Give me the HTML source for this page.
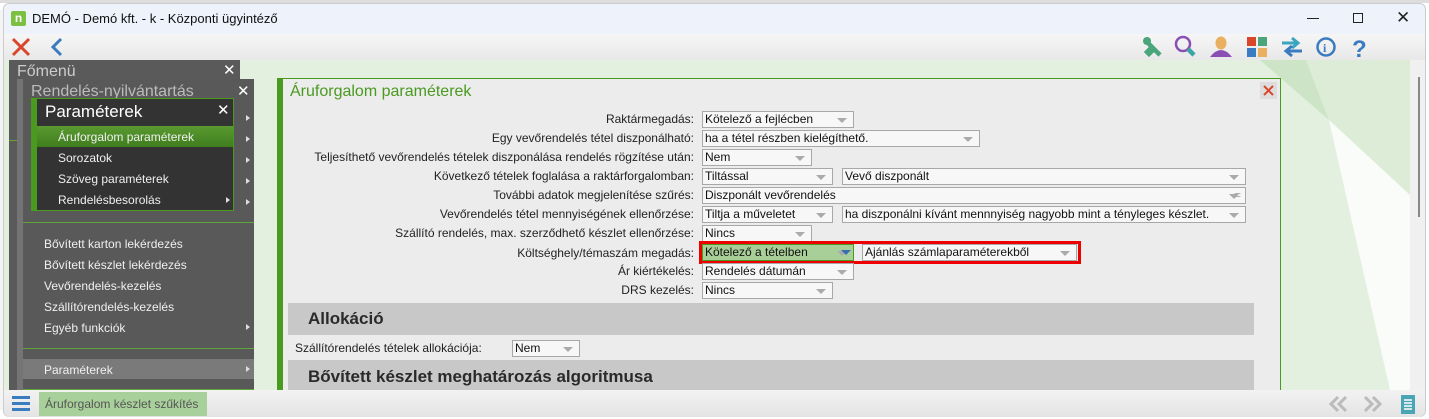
<!DOCTYPE html>
<html><head><meta charset="utf-8"><style>
*{margin:0;padding:0;box-sizing:border-box}
body{width:1429px;height:419px;overflow:hidden;background:#fff;font-family:"Liberation Sans",sans-serif;position:relative}
.a{position:absolute}
.lbl{position:absolute;right:735px;font-size:12px;color:#222;white-space:nowrap;line-height:14px}
.dd{position:absolute;height:17px;border:1px solid #a8a8a8;background:#f7f7f7;font-size:12px;color:#111;line-height:15px;padding-left:2px;white-space:nowrap;overflow:hidden}
.dd:after{content:"";position:absolute;right:6px;top:6px;border-left:5px solid transparent;border-right:5px solid transparent;border-top:5px solid #aaa}
.mi{position:absolute;left:44px;font-size:12px;color:#f0f0f0;line-height:14px;white-space:nowrap}
.sm{position:absolute;left:58px;font-size:12px;color:#f0f0f0;line-height:14px;white-space:nowrap}
.ar{position:absolute;width:0;height:0;border-top:3px solid transparent;border-bottom:3px solid transparent;border-left:4px solid #ddd}
.sec{position:absolute;left:288px;width:966px;background:#c8c8c8;font-weight:bold;font-size:17px;color:#2a2a2a;padding-left:20px}
</style></head><body>
<div class="a" style="left:0;top:0;width:1429px;height:3px;background:#ddd"></div>
<div class="a" style="left:3px;top:3px;width:1423px;height:414px;background:#eef2fa;border-radius:6px;border:1px solid #ccc"></div>
<div class="a" style="left:11px;top:11px;width:15px;height:15px;background:#7bc043;border-radius:2px;color:#fff;font-size:12px;font-weight:bold;line-height:14px;text-align:center">n</div>
<div class="a" style="left:32px;top:11px;font-size:13px;color:#111">DEMÓ - Demó kft. - k - Központi ügyintéző</div>
<div class="a" style="left:1307px;top:18px;width:12px;height:1px;background:#222"></div>
<div class="a" style="left:1353px;top:13px;width:10px;height:10px;border:1px solid #222"></div>
<div class="a" style="left:1396px;top:8px;font-size:17px;color:#222">✕</div>
<div class="a" style="left:4px;top:34px;width:1421px;height:26px;background:linear-gradient(#f6f6f6,#e8e8e8)"></div>
<svg class="a" style="left:10px;top:36px" width="22" height="22"><path d="M3 3L19 19M19 3L3 19" stroke="#d9472b" stroke-width="3"/></svg>
<svg class="a" style="left:48px;top:36px" width="18" height="22"><path d="M13 3L5 11L13 19" stroke="#3a7cc0" stroke-width="3" fill="none"/></svg>
<svg class="a" style="left:1140px;top:34px" width="240" height="26">
<path d="M6 7l6 6 -5 5 2 2 5-5 6 6" stroke="#4aa57a" stroke-width="4.5" fill="none"/><circle cx="7" cy="7" r="4" fill="#4aa57a"/>
<circle cx="43" cy="10" r="7" stroke="#8a4fb5" stroke-width="2.5" fill="none"/><path d="M48 15l6 6" stroke="#3aa5a5" stroke-width="4.5"/>
<ellipse cx="81" cy="9" rx="5.5" ry="6.5" fill="#e8b060"/><path d="M70 23q11-14 22 0z" fill="#8a4fb5"/>
<rect x="107" y="3" width="9" height="9" fill="#d9472b"/><rect x="118" y="3" width="9" height="9" fill="#4aa57a"/><rect x="107" y="14" width="9" height="9" fill="#3a7cc0"/><rect x="118" y="14" width="9" height="9" fill="#e8b060"/>
<path d="M142 9h14M152 4l6 5-6 5" stroke="#3aa5c0" stroke-width="3" fill="none"/><path d="M162 17h-14M152 12l-6 5 6 5" stroke="#3a7cc0" stroke-width="3" fill="none"/>
<circle cx="186" cy="13" r="8.5" stroke="#3a7cc0" stroke-width="2.5" fill="none"/><text x="183" y="18" font-size="12" font-weight="bold" fill="#3a7cc0" font-family="Liberation Serif">i</text>
<text x="212" y="23" font-size="24" font-weight="bold" fill="#3a7cc0" font-family="Liberation Sans">?</text>
</svg>
<div class="a" style="left:4px;top:60px;width:1406px;height:330px;background:#e3f0df"></div>
<svg class="a" style="left:1240px;top:60px" width="170" height="330"><polygon points="20,0 66,0 89,60" fill="#cde5c6"/><polygon points="66,0 170,0 170,135 89,60" fill="#ddecd6"/><polygon points="89,60 170,135 170,150 200,330 150,330" fill="#f9fcf8"/></svg>
<div class="a" style="left:1410px;top:60px;width:15px;height:330px;background:#f0f0f0"></div>
<div class="a" style="left:1418px;top:77px;width:2px;height:140px;background:#888"></div>
<div class="a" style="left:9px;top:60px;width:231px;height:330px;background:#5a5a5a"></div>
<div class="a" style="left:17px;top:63px;font-size:16px;color:#ccc">Főmenü</div>
<div class="a" style="left:223px;top:61px;font-size:15px;color:#fff">✕</div>
<div class="a" style="left:9px;top:140px;width:10px;height:1px;background:#5fa53a"></div>
<div class="a" style="left:17px;top:79px;width:237px;height:311px;background:#595959"></div>
<div class="a" style="left:17px;top:79px;width:6px;height:311px;background:#747474"></div>
<div class="a" style="left:31px;top:83px;font-size:16px;color:#bbb">Rendelés-nyilvántartás</div>
<div class="a" style="left:237px;top:82px;font-size:15px;color:#fff">✕</div>
<div class="a" style="left:23px;top:222px;width:231px;height:1px;background:#5fa53a"></div>
<div class="mi" style="top:237px">Bővített karton lekérdezés</div>
<div class="mi" style="top:258px">Bővített készlet lekérdezés</div>
<div class="mi" style="top:279px">Vevőrendelés-kezelés</div>
<div class="mi" style="top:300px">Szállítórendelés-kezelés</div>
<div class="mi" style="top:321px">Egyéb funkciók</div>
<div class="a" style="left:23px;top:348px;width:231px;height:1px;background:#5fa53a"></div>
<div class="a" style="left:23px;top:359px;width:231px;height:20px;background:#7a7a7a"></div>
<div class="mi" style="top:363px">Paraméterek</div>
<div class="a" style="left:23px;top:389px;width:231px;height:1px;background:#5fa53a"></div>
<div class="ar" style="left:246px;top:115px"></div><div class="ar" style="left:246px;top:136px"></div><div class="ar" style="left:246px;top:157px"></div><div class="ar" style="left:246px;top:178px"></div><div class="ar" style="left:246px;top:199px"></div><div class="ar" style="left:246px;top:324px"></div><div class="ar" style="left:246px;top:366px"></div>
<div class="a" style="left:31px;top:98px;width:203px;height:113px;background:#333;border:1px solid #4a9a20;border-left-width:6px"></div>
<div class="a" style="left:45px;top:102px;font-size:17px;color:#fff">Paraméterek</div>
<div class="a" style="left:217px;top:101px;font-size:15px;color:#fff">✕</div>
<div class="a" style="left:37px;top:126px;width:196px;height:21px;background:linear-gradient(#5a9a30,#3f7d1e)"></div>
<div class="sm" style="top:130px">Áruforgalom paraméterek</div>
<div class="sm" style="top:151px">Sorozatok</div>
<div class="sm" style="top:172px">Szöveg paraméterek</div>
<div class="sm" style="top:193px">Rendelésbesorolás</div>
<div class="ar" style="left:226px;top:197px"></div>
<div class="a" style="left:0;top:10px;width:3px;height:400px;background:#f4f4f4"></div>
<div class="a" style="left:277px;top:78px;width:1004px;height:312px;background:#ececec;border-top:1px solid #4a9a20;border-right:1px solid #4a9a20;border-left:6px solid #4a9a20"></div>
<div class="a" style="left:290px;top:83px;font-size:16px;color:#4a9a20">Áruforgalom paraméterek</div>
<div class="a" style="left:1260px;top:82px;width:17px;height:17px;background:#ddd"></div>
<svg class="a" style="left:1262px;top:84px" width="13" height="13"><path d="M2 2L11 11M11 2L2 11" stroke="#d9472b" stroke-width="2"/></svg>

<div class="lbl" style="top:112px">Raktármegadás:</div>
<div class="lbl" style="top:131px">Egy vevőrendelés tétel diszponálható:</div>
<div class="lbl" style="top:150px">Teljesíthető vevőrendelés tételek diszponálása rendelés rögzítése után:</div>
<div class="lbl" style="top:169px">Következő tételek foglalása a raktárforgalomban:</div>
<div class="lbl" style="top:188px">További adatok megjelenítése szűrés:</div>
<div class="lbl" style="top:207px">Vevőrendelés tétel mennyiségének ellenőrzése:</div>
<div class="lbl" style="top:226px">Szállító rendelés, max. szerződhető készlet ellenőrzése:</div>
<div class="lbl" style="top:246px">Költséghely/témaszám megadás:</div>
<div class="lbl" style="top:264px">Ár kiértékelés:</div>
<div class="lbl" style="top:283px">DRS kezelés:</div>

<div class="dd" style="left:702px;top:111px;width:152px">Kötelező a fejlécben</div>
<div class="dd" style="left:702px;top:130px;width:278px">ha a tétel részben kielégíthető.</div>
<div class="dd" style="left:702px;top:149px;width:110px">Nem</div>
<div class="dd" style="left:702px;top:168px;width:131px">Tiltással</div>
<div class="dd" style="left:842px;top:168px;width:404px">Vevő diszponált</div>
<div class="dd" style="left:702px;top:187px;width:544px">Diszponált vevőrendelés<span style="position:absolute;right:4px;top:0;color:#aaa">=</span></div>
<div class="dd" style="left:702px;top:206px;width:131px">Tiltja a műveletet</div>
<div class="dd" style="left:842px;top:206px;width:404px">ha diszponálni kívánt mennnyiség nagyobb mint a tényleges készlet.</div>
<div class="dd" style="left:702px;top:225px;width:110px">Nincs</div>
<div class="a" style="left:699px;top:241px;width:382px;height:23px;border:3px solid #e00"></div>
<div class="dd" style="left:702px;top:244px;width:152px;background:#a9cf98;border-color:#4a9a20">Kötelező a tételben</div>
<div class="a" style="left:841px;top:250px;border-left:5px solid transparent;border-right:5px solid transparent;border-top:5px solid #3a6cb0"></div>
<div class="dd" style="left:862px;top:244px;width:215px">Ajánlás számlaparaméterekből</div>
<div class="dd" style="left:702px;top:263px;width:152px">Rendelés dátumán</div>
<div class="dd" style="left:702px;top:282px;width:131px">Nincs</div>

<div class="sec" style="top:303px;height:32px;line-height:32px">Allokáció</div>
<div class="a" style="left:295px;top:341px;font-size:12px;color:#222">Szállítórendelés tételek allokációja:</div>
<div class="dd" style="left:512px;top:340px;width:68px">Nem</div>
<div class="sec" style="top:360px;height:30px;line-height:34px">Bővített készlet meghatározás algoritmusa</div>

<div class="a" style="left:4px;top:390px;width:1421px;height:27px;background:linear-gradient(#f2f2f2,#e4e4e4);border-radius:0 0 6px 6px"></div>
<div class="a" style="left:12px;top:396px;width:18px;height:3px;background:#3a7cc0;box-shadow:0 6px 0 #3a7cc0,0 12px 0 #3a7cc0"></div>
<div class="a" style="left:39px;top:392px;width:168px;height:24px;background:#a8d09a;font-size:12px;color:#555;line-height:24px;padding-left:6px">Áruforgalom készlet szűkítés</div>
<svg class="a" style="left:1328px;top:394px" width="60" height="20"><path d="M10 3L3 10L10 17M18 3L11 10L18 17" stroke="#bbb" stroke-width="3" fill="none"/><path d="M37 3L44 10L37 17M45 3L52 10L45 17" stroke="#bbb" stroke-width="3" fill="none"/></svg>
<svg class="a" style="left:1400px;top:393px" width="16" height="22"><rect x="1" y="2" width="14" height="19" fill="#4aa5b5"/><path d="M4 7h8M4 10h8M4 13h8M4 16h8" stroke="#fff" stroke-width="1.5"/></svg>
</body></html>
